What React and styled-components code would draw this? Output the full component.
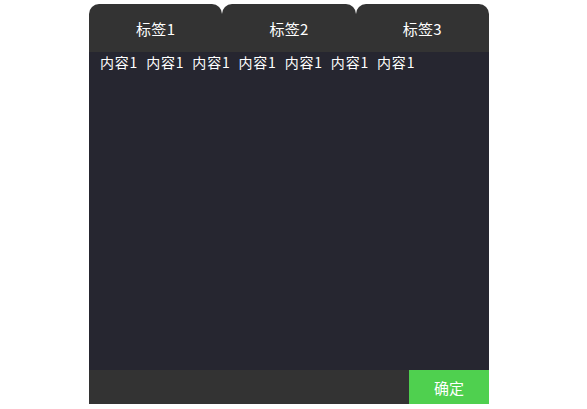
import styled, { createGlobalStyle } from "styled-components";

const GlobalStyle = createGlobalStyle`
  html, body {
    margin: 0;
    padding: 0;
    background: #ffffff;
  }
  body {
    font-family: "Noto Sans CJK SC", "Noto Sans", sans-serif;
  }
`;

const tabs = ["标签1", "标签2", "标签3"];
const items = Array.from({ length: 7 }, () => "内容1");

export default function App() {
  return (
    <>
      <GlobalStyle />
      <Page>
        <Panel>
          <TabBar>
            {tabs.map((t) => (
              <Tab key={t}>{t}</Tab>
            ))}
          </TabBar>
          <Content>
            {items.map((text, i) => (
              <Item key={i}>{text}</Item>
            ))}
          </Content>
          <Footer>
            <ConfirmButton>确定</ConfirmButton>
          </Footer>
        </Panel>
      </Page>
    </>
  );
}

const Page = styled.div`
  width: 587px;
  height: 409px;
  padding: 4px 0 0 89px;
  box-sizing: border-box;
`;

const Panel = styled.div`
  width: 400px;
  height: 400px;
  display: flex;
  flex-direction: column;
`;

const TabBar = styled.div`
  height: 48px;
  display: flex;
`;

const Tab = styled.div`
  flex: 1;
  display: flex;
  align-items: center;
  justify-content: center;
  background-color: #333333;
  border-radius: 10px 10px 0 0;
  color: #ffffff;
  font-size: 15px;
  letter-spacing: 0.3px;
  cursor: pointer;
`;

const Content = styled.div`
  flex: 1;
  display: flex;
  flex-wrap: wrap;
  align-content: flex-start;
  column-gap: 8px;
  padding: 1px 11px;
  background-color: #262630;
  color: #ffffff;
  font-size: 14px;
  line-height: 19px;
`;

const Item = styled.span`
  letter-spacing: 0.8px;
`;

const Footer = styled.div`
  height: 34px;
  display: flex;
  justify-content: flex-end;
  background-color: #333333;
`;

const ConfirmButton = styled.button`
  width: 80px;
  padding: 0;
  border: none;
  background-color: #4fd04f;
  color: #ffffff;
  font-family: inherit;
  font-size: 15px;
  cursor: pointer;
`;
